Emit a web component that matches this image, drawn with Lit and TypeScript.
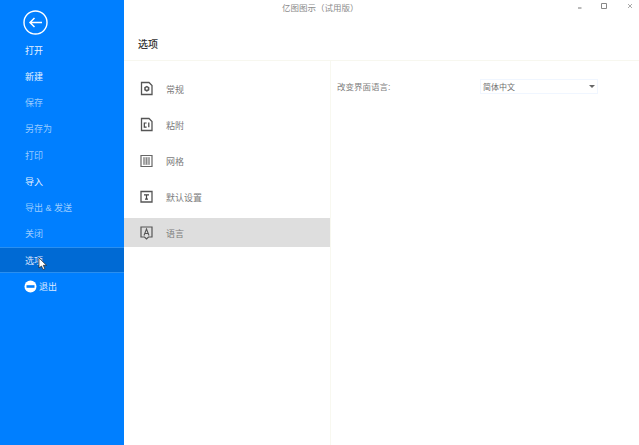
import { LitElement, html, css, svg } from "lit";
import { customElement } from "lit/decorators.js";

const doc = (inner: unknown) => svg`<path d="M1.500 1.500h7.500l3 3v9h-10.500z" fill="none" stroke="#555" stroke-width="1.300"/>${inner}`;
const icons: Record<string, unknown> = {
  general: doc(svg`<path d="M6.800 4.800l2.600 1.500v2.900l-2.600 1.500-2.600-1.500V6.300z" fill="#555"/><circle cx="6.800" cy="7.700" r="1.100" fill="#fff"/>`),
  paste: doc(svg`<path d="M6.600 6H4.300v4.200h2.300M8.800 5.500v4.700" fill="none" stroke="#444" stroke-width="1.200"/>`),
  grid: svg`<path d="M1 2.500h11v11H1z" fill="none" stroke="#666" stroke-width="1.200"/><path d="M3 5h7M3 7h7M3 9h7M3 11h7M4 4.500v7M6.500 4.500v7M9 4.500v7" fill="none" stroke="#888" stroke-width="1"/>`,
  defaults: svg`<path d="M1 2.500h11v10.500H1z" fill="none" stroke="#555" stroke-width="1.300"/><path d="M4 5.800h5M6.500 5.800v4.400M5 10.200h3" fill="none" stroke="#444" stroke-width="1.200"/>`,
  lang: svg`<path d="M1 2h11v10H8.500l-2 2-2-2H1z" fill="none" stroke="#555" stroke-width="1.200"/><path d="M4 10.500L6.500 4 9 10.500M4.900 8.500h3.200" fill="none" stroke="#555" stroke-width="1.100"/>`,
};

const menu = [
  ["打开", "on"], ["新建", "on"], ["保存", "dim"], ["另存为", "dim"], ["打印", "dim"],
  ["导入", "on"], ["导出 & 发送", "dim"], ["关闭", "dim"], ["选项", "sel"],
];
const options = [
  ["general", "常规"], ["paste", "粘附"], ["grid", "网格"], ["defaults", "默认设置"], ["lang", "语言"],
];

@customElement("app-root")
export class AppRoot extends LitElement {
  static styles = css`
    :host { display: block; width: 639px; height: 445px; overflow: hidden; position: relative; background: #fff;
      font-family: "Liberation Sans", "Noto Sans CJK SC", sans-serif; font-size: 9px; color: #666; }
    .app { display: flex; height: 445px; }
    .side { width: 124px; flex: none; background: #007fff; display: flex; flex-direction: column; padding-top: 10px; box-sizing: border-box; }
    .back { margin-left: 23px; width: 25px; height: 25px; display: block; margin-bottom: 2px; }
    .item { height: 26.250px; padding-left: 25px; display: flex; align-items: center; gap: 4px; font-size: 9px; flex: none; }
    .on { color: #e8f3ff; }
    .dim { color: #9accff; }
    .sel { color: #dbe4ff; background: #006ad4; border-top: 1px solid #2a8ff0; border-bottom: 1px solid #2a8ff0; box-sizing: border-box; }
    .exit { color: #dbe9ff; gap: 2px; padding-left: 24px; }
    .main { flex: 1; display: flex; flex-direction: column; min-width: 0; }
    .titlebar { height: 14px; display: flex; align-items: center; position: relative; flex: none; }
    .apptitle { width: 100%; padding-left: 158px; font-size: 8.500px; color: #8a8a8a; }
    .wins { position: absolute; right: 0; top: 0; }
    .head { height: 47px; flex: none; box-sizing: border-box; border-bottom: 1px solid #f7f7ef; padding: 19px 0 0 14px; font-size: 10px; color: #333; font-weight: 500; line-height: 24px; }
    .body { flex: 1; display: flex; }
    .list { width: 207px; flex: none; box-sizing: border-box; border-right: 1px solid #f8f8f0; padding-top: 13px; display: flex; flex-direction: column; gap: 7px; }
    .opt { height: 29px; display: flex; align-items: center; padding-left: 16px; gap: 12px; font-size: 9px; color: #7c7c7c; flex: none; }
    .opt svg { width: 14px; height: 16px; flex: none; }
    .opt span { padding-top: 1px; }
    .opt.active { background: #dedede; }
    .pane { flex: 1; padding: 18px 0 0 6px; display: flex; align-items: flex-start; }
    .label { width: 143px; line-height: 16px; font-size: 8.500px; color: #808080; }
    .select { width: 118px; height: 15px; box-sizing: border-box; border: 1px solid #f0f6ff; display: flex; align-items: center; justify-content: space-between; padding: 0 2px 0 2px; font-size: 8px; color: #707070; }
    .caret { width: 0; height: 0; border: 3px solid transparent; border-top: 3px solid #666; border-bottom: 0; }
    .cursor { position: absolute; left: 38px; top: 257px; width: 10px; height: 14px; }
  `;

  render() {
    return html`<div class="app">
      <nav class="side">
        <svg class="back" viewBox="0 0 25 25">
          <circle cx="12.500" cy="12.500" r="11.500" fill="none" stroke="#fff" stroke-width="1.400"/>
          <path d="M19 12.500H7M11.500 8l-4.500 4.500 4.500 4.500" fill="none" stroke="#fff" stroke-width="1.500"/>
        </svg>
        ${menu.map(([t, c]) => html`<div class="item ${c}">${t}</div>`)}
        <div class="item exit">
          <svg width="13" height="13" viewBox="0 0 13 13"><circle cx="6.500" cy="6.500" r="6" fill="#fff"/><rect x="2.500" y="5.200" width="8" height="2.600" fill="#007fff"/></svg>
          退出
        </div>
      </nav>
      <div class="main">
        <div class="titlebar">
          <div class="apptitle">亿图图示（试用版）</div>
          <svg class="wins" width="70" height="14" viewBox="0 0 70 14">
            <path d="M9 8h3.500" stroke="#777" fill="none"/>
            <path d="M32.500 3.500h5v5h-5z" stroke="#888" fill="none"/>
            <path d="M59 4l4 4M63 4l-4 4" stroke="#aaa" fill="none"/>
          </svg>
        </div>
        <div class="head">选项</div>
        <div class="body">
          <div class="list">
            ${options.map(([k, t]) => html`<div class="opt ${k === "lang" ? "active" : ""}">
              <svg viewBox="0 0 14 16">${icons[k]}</svg><span>${t}</span>
            </div>`)}
          </div>
          <div class="pane">
            <div class="label">改变界面语言:</div>
            <div class="select"><span>简体中文</span><i class="caret"></i></div>
          </div>
        </div>
      </div>
    </div>
    <svg class="cursor" viewBox="0 0 10 14"><path d="M1 1v10l2.500-2 1.500 3.500 1.800-.8L5.300 8.300H8.500z" fill="#fff" stroke="#222" stroke-width=".7"/></svg>`;
  }
}
